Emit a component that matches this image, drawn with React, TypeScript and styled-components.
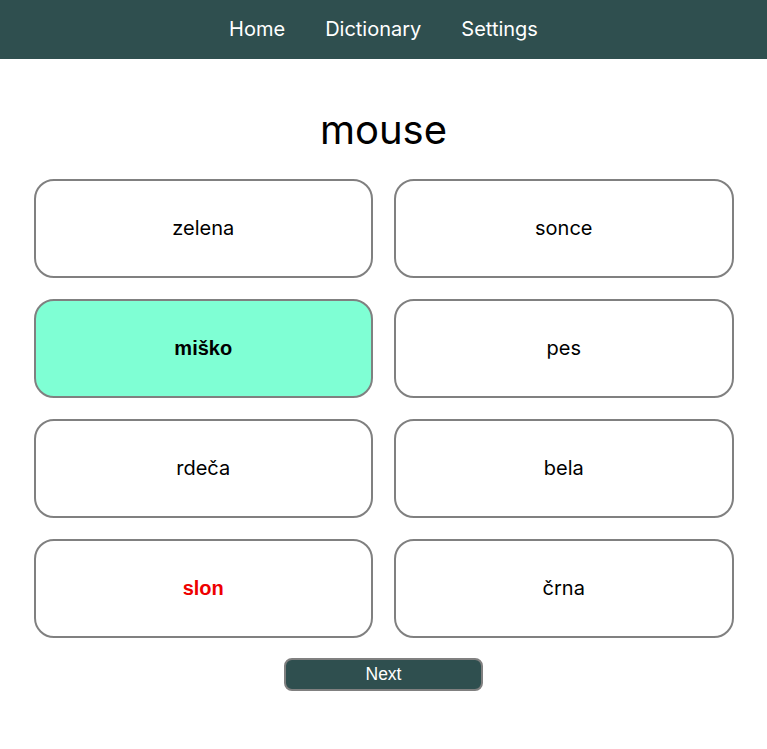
import React from "react";
import styled, { createGlobalStyle } from "styled-components";

const Global = createGlobalStyle`
  html, body { margin: 0; padding: 0; background: #fff; }
  body { font-family: Inter, "Noto Sans", sans-serif; color: #000; }
`;

const NavBar = styled.nav`
  height: 59px;
  box-sizing: border-box;
  padding-bottom: 2px;
  background: #2f4f4f;
  display: flex;
  justify-content: center;
  align-items: center;
  gap: 40px;
`;

const NavLink = styled.a`
  color: #fff;
  font-family: Inter, sans-serif;
  font-size: 20px;
  text-decoration: none;
  cursor: pointer;
`;

const Main = styled.main`
  display: flex;
  flex-direction: column;
  align-items: center;
`;

const Title = styled.h1`
  margin: 47px 0 25px;
  font-family: Inter, sans-serif;
  font-size: 40px;
  line-height: 48px;
  font-weight: 400;
`;

const Grid = styled.div`
  width: 700px;
  display: grid;
  grid-template-columns: 1fr 1fr;
  column-gap: 21px;
  row-gap: 21.5px;
`;

type Status = "none" | "correct" | "wrong";

const Card = styled.button<{ $status: Status }>`
  height: 98.5px;
  box-sizing: border-box;
  border: 2px solid #808080;
  border-radius: 20px;
  background: ${(p) => (p.$status === "correct" ? "#7fffd4" : "#fff")};
  color: ${(p) => (p.$status === "wrong" ? "#ee0000" : "#000")};
  font-family: ${(p) =>
    p.$status === "none" ? "Inter, sans-serif" : '"Liberation Sans", Arial, sans-serif'};
  font-weight: ${(p) => (p.$status === "none" ? 400 : 700)};
  font-size: 20px;
  display: flex;
  align-items: center;
  justify-content: center;
  cursor: pointer;
  padding: 0;
`;

const NextButton = styled.button`
  margin-top: 20px;
  width: 199px;
  height: 33px;
  box-sizing: border-box;
  background: #2f4f4f;
  color: #fff;
  border: 2px solid #808080;
  border-radius: 8px;
  font-family: "Liberation Sans", Arial, sans-serif;
  font-size: 17.5px;
  cursor: pointer;
  padding: 0;
`;

const options: { word: string; status: Status }[] = [
  { word: "zelena", status: "none" },
  { word: "sonce", status: "none" },
  { word: "miško", status: "correct" },
  { word: "pes", status: "none" },
  { word: "rdeča", status: "none" },
  { word: "bela", status: "none" },
  { word: "slon", status: "wrong" },
  { word: "črna", status: "none" },
];

export default function App() {
  return (
    <>
      <Global />
      <NavBar>
        <NavLink>Home</NavLink>
        <NavLink>Dictionary</NavLink>
        <NavLink>Settings</NavLink>
      </NavBar>
      <Main>
        <Title>mouse</Title>
        <Grid>
          {options.map((o) => (
            <Card key={o.word} $status={o.status}>
              {o.word}
            </Card>
          ))}
        </Grid>
        <NextButton>Next</NextButton>
      </Main>
    </>
  );
}
